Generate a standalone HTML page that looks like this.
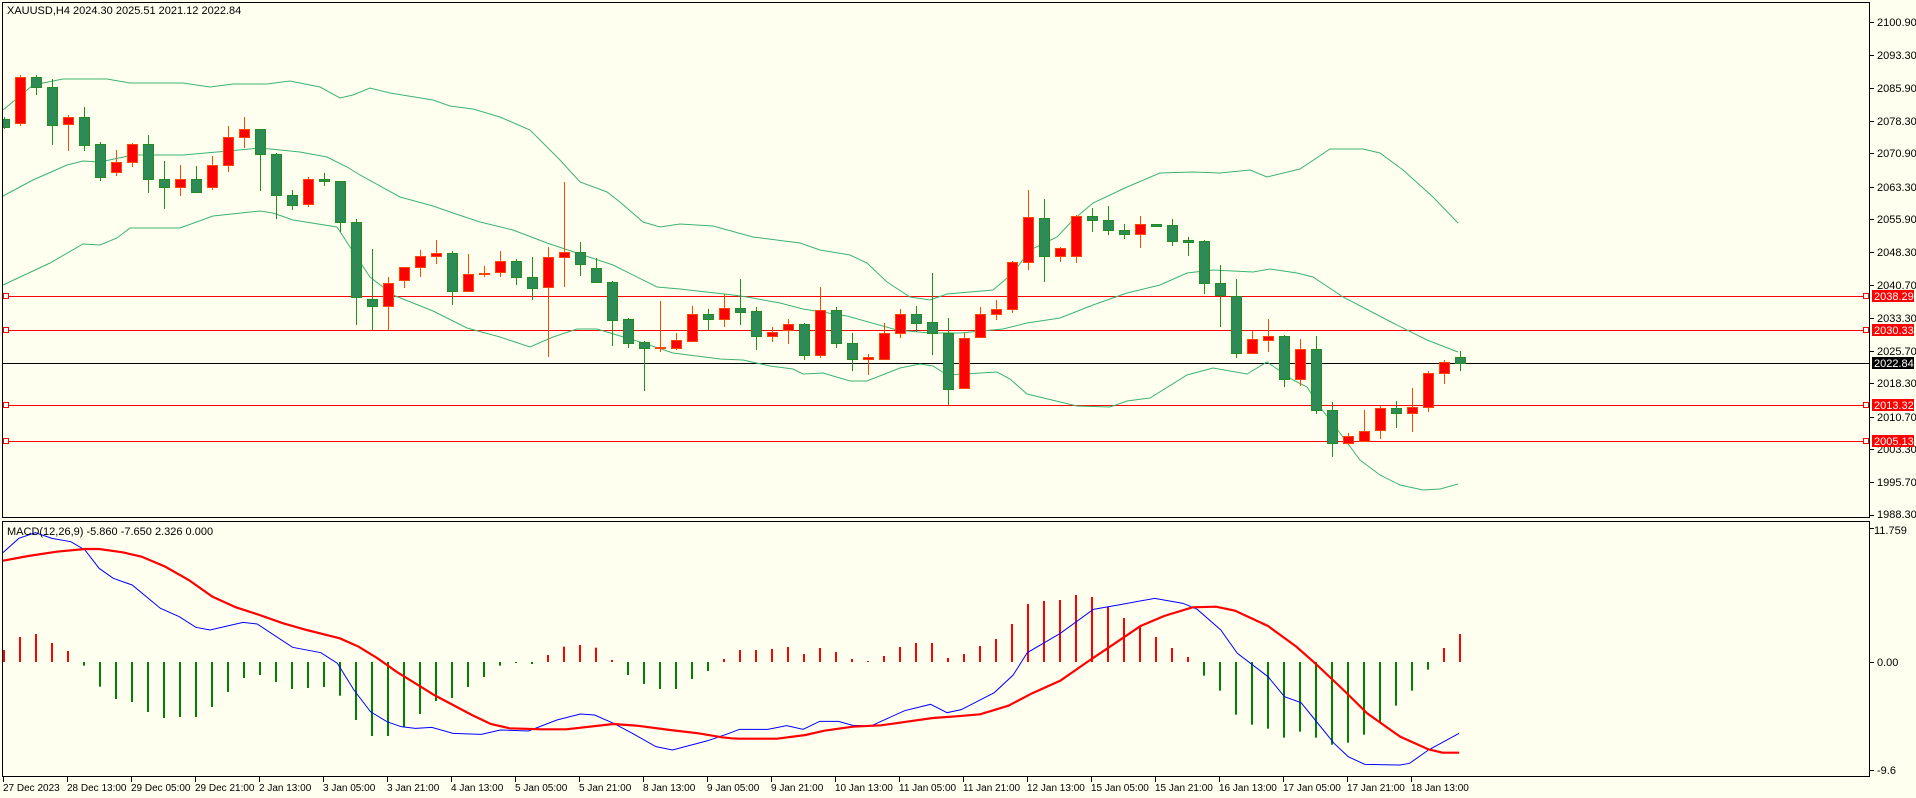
<!DOCTYPE html>
<html><head><meta charset="utf-8">
<style>
html,body{margin:0;padding:0;background:#FFFFF0;width:1916px;height:798px;overflow:hidden}
svg{display:block}
text{font-family:"Liberation Sans",sans-serif;font-size:11px;fill:#000}
</style></head>
<body>
<svg id="s" width="1916" height="798" xmlns="http://www.w3.org/2000/svg">
<rect width="1916" height="798" fill="#FFFFF0"/>
<g id="g"></g>
<rect x="2.5" y="2.5" width="1867" height="515" fill="none" stroke="#000" stroke-width="1"/>
<rect x="2.5" y="521.5" width="1867" height="255" fill="none" stroke="#000" stroke-width="1"/>
<text x="7" y="14">XAUUSD,H4  2024.30 2025.51 2021.12 2022.84</text>
<text x="7" y="535">MACD(12,26,9) -5.860 -7.650 2.326 0.000</text>
<g id="ax">
<text x="1877" y="26">2100.90</text>
<text x="1877" y="59">2093.30</text>
<text x="1877" y="92">2085.90</text>
<text x="1877" y="125">2078.30</text>
<text x="1877" y="157">2070.90</text>
<text x="1877" y="191">2063.30</text>
<text x="1877" y="223">2055.90</text>
<text x="1877" y="256">2048.30</text>
<text x="1877" y="289">2040.70</text>
<text x="1877" y="322">2033.30</text>
<text x="1877" y="355">2025.70</text>
<text x="1877" y="387">2018.30</text>
<text x="1877" y="421">2010.70</text>
<text x="1877" y="453">2003.30</text>
<text x="1877" y="486">1995.70</text>
<text x="1877" y="518">1988.30</text>
<text x="1874" y="534">11.759</text>
<text x="1877" y="666">0.00</text>
<text x="1877" y="774">-9.6</text>
</g>
<g id="tags">
<rect x="1872" y="290" width="42" height="12" fill="#FF0000"/><text x="1874" y="300" style="fill:#fff">2038.29</text>
<rect x="1872" y="324" width="42" height="12" fill="#FF0000"/><text x="1874" y="334" style="fill:#fff">2030.33</text>
<rect x="1872" y="357" width="42" height="12" fill="#000"/><text x="1874" y="367" style="fill:#fff">2022.84</text>
<rect x="1872" y="399" width="42" height="12" fill="#FF0000"/><text x="1874" y="409" style="fill:#fff">2013.32</text>
<rect x="1872" y="435" width="42" height="12" fill="#FF0000"/><text x="1874" y="445" style="fill:#fff">2005.13</text>
</g>
<g>
<text x="3" y="791" style="font-size:10px">27 Dec 2023</text>
<text x="67" y="791" style="font-size:10px">28 Dec 13:00</text>
<text x="131" y="791" style="font-size:10px">29 Dec 05:00</text>
<text x="195" y="791" style="font-size:10px">29 Dec 21:00</text>
<text x="259" y="791" style="font-size:10px">2 Jan 13:00</text>
<text x="323" y="791" style="font-size:10px">3 Jan 05:00</text>
<text x="387" y="791" style="font-size:10px">3 Jan 21:00</text>
<text x="451" y="791" style="font-size:10px">4 Jan 13:00</text>
<text x="515" y="791" style="font-size:10px">5 Jan 05:00</text>
<text x="579" y="791" style="font-size:10px">5 Jan 21:00</text>
<text x="643" y="791" style="font-size:10px">8 Jan 13:00</text>
<text x="707" y="791" style="font-size:10px">9 Jan 05:00</text>
<text x="771" y="791" style="font-size:10px">9 Jan 21:00</text>
<text x="835" y="791" style="font-size:10px">10 Jan 13:00</text>
<text x="899" y="791" style="font-size:10px">11 Jan 05:00</text>
<text x="963" y="791" style="font-size:10px">11 Jan 21:00</text>
<text x="1027" y="791" style="font-size:10px">12 Jan 13:00</text>
<text x="1091" y="791" style="font-size:10px">15 Jan 05:00</text>
<text x="1155" y="791" style="font-size:10px">15 Jan 21:00</text>
<text x="1219" y="791" style="font-size:10px">16 Jan 13:00</text>
<text x="1283" y="791" style="font-size:10px">17 Jan 05:00</text>
<text x="1347" y="791" style="font-size:10px">17 Jan 21:00</text>
<text x="1411" y="791" style="font-size:10px">18 Jan 13:00</text>
</g>
</svg>
<script>
(function(){
var NS="http://www.w3.org/2000/svg",g=document.getElementById("g");
function el(n,a){var e=document.createElementNS(NS,n);for(var k in a)e.setAttribute(k,a[k]);g.appendChild(e);return e;}
var py=[22,55,88,121,153,187,219,252,285,318,351,383,417,449,482,515,662,528,770];
py.forEach(function(y){el("line",{x1:1870,y1:y+.5,x2:1874,y2:y+.5,stroke:"#000"});});
for(var k=0;k<23;k++){var x=3+64*k;el("line",{x1:x+.5,y1:777,x2:x+.5,y2:782,stroke:"#000"});}
[296,330,405,441].forEach(function(y){
 el("line",{x1:3,y1:y+.5,x2:1869,y2:y+.5,stroke:"#FF0000"});
 el("rect",{x:3.5,y:y-2.5,width:5,height:5,fill:"#fff",stroke:"#FF0000"});
 el("rect",{x:1863.5,y:y-2.5,width:5,height:5,fill:"#fff",stroke:"#FF0000"});
});
el("line",{x1:3,y1:363.5,x2:1869,y2:363.5,stroke:"#000"});
function pl(pts,c,w){el("polyline",{points:pts.map(function(p){return p[0]+","+p[1]}).join(" "),fill:"none",stroke:c,"stroke-width":w});}
var up=[[3,110],[33,85],[63,79],[107,79],[130,83],[183,83],[210,87],[233,84],[267,84],[290,81],[320,87],[340,98],[353,95],[370,88],[390,93],[433,100],[450,106],[473,109],[500,117],[530,130],[560,160],[580,182],[607,192],[620,202],[643,222],[660,227],[680,224],[713,226],[753,237],[800,243],[820,250],[850,255],[867,263],[887,282],[910,297],[930,300],[947,294],[993,290],[1013,273],[1030,250],[1057,237],[1073,220],[1093,203],[1127,187],[1160,173],[1193,172],[1220,173],[1250,170],[1267,177],[1300,169],[1330,149],[1363,149],[1380,153],[1403,170],[1433,197],[1458,223]];
var mid=[[3,196],[33,180],[67,165],[83,161],[100,162],[133,155],[183,155],[217,152],[260,148],[300,152],[327,157],[347,167],[360,175],[400,197],[433,206],[453,213],[480,222],[513,230],[547,243],[613,265],[657,287],[680,289],[733,295],[747,297],[780,303],[803,309],[847,316],[897,330],[930,333],[960,333],[1003,329],[1027,323],[1060,318],[1093,305],[1127,293],[1160,285],[1187,273],[1213,270],[1253,272],[1270,269],[1297,273],[1313,277],[1343,297],[1393,323],[1427,340],[1458,352]];
var lo=[[3,285],[50,263],[83,244],[100,245],[117,238],[130,228],[180,228],[213,216],[260,211],[273,213],[293,220],[337,227],[350,247],[370,277],[393,295],[433,311],[467,328],[500,337],[530,347],[553,337],[577,329],[597,329],[640,342],[673,353],[720,359],[743,360],[770,366],[793,369],[803,374],[823,373],[850,381],[867,381],[900,368],[920,364],[933,366],[947,375],[997,372],[1010,379],[1027,394],[1077,406],[1110,407],[1127,401],[1150,398],[1187,375],[1213,368],[1247,374],[1267,362],[1293,380],[1307,387],[1320,407],[1343,437],[1360,460],[1380,475],[1400,485],[1423,490],[1440,489],[1458,484]];
pl(up,"#3CB371",1);pl(mid,"#3CB371",1);pl(lo,"#3CB371",1);
var C=[[117,119,127,129,'g'],[75,77,123,126,'r'],[75,77,87,95,'g'],[79,87,125,145,'g'],[115,117,124,151,'r'],[107,117,145,151,'g'],[142,144,177,181,'g'],[150,162,172,176,'r'],[143,144,162,167,'r'],[135,144,179,193,'g'],
[161,179,187,209,'g'],[165,179,187,196,'r'],[166,179,192,192,'g'],[156,165,187,190,'r'],[126,137,165,172,'r'],[117,129,137,148,'r'],[129,129,154,191,'g'],[153,154,195,219,'g'],[190,195,205,210,'g'],[177,179,204,207,'r'],
[173,179,181,186,'g'],[181,181,222,232,'g'],[219,222,297,325,'g'],[249,299,306,330,'g'],[277,283,306,330,'r'],[267,267,280,288,'r'],[250,256,267,277,'r'],[240,253,256,264,'r'],[251,253,291,305,'g'],[254,274,291,292,'r'],
[266,273,274,277,'r'],[251,261,272,277,'r'],[259,261,277,285,'g'],[257,277,288,300,'g'],[247,257,287,357,'r'],[182,252,257,287,'r'],[242,252,264,276,'g'],[258,268,282,282,'g'],[281,282,320,346,'g'],[318,319,343,348,'g'],
[341,342,348,391,'g'],[301,347,348,352,'r'],[333,340,348,350,'r'],[306,314,341,342,'r'],[309,314,319,330,'g'],[294,308,319,327,'r'],[279,308,312,325,'g'],[307,311,336,350,'g'],[327,332,336,342,'r'],[319,324,330,344,'r'],
[323,324,355,360,'g'],[287,310,355,358,'r'],[307,310,343,348,'g'],[333,343,359,371,'g'],[354,357,359,375,'r'],[323,333,359,359,'r'],[309,314,333,338,'r'],[306,314,323,332,'g'],[273,322,333,355,'g'],[318,333,389,405,'g'],
[333,338,388,388,'r'],[307,314,337,337,'r'],[300,309,314,320,'r'],[261,262,309,313,'r'],[190,217,262,270,'r'],[199,218,256,282,'g'],[247,248,256,262,'r'],[215,216,256,263,'r'],[208,216,220,232,'g'],[206,220,230,235,'g'],
[224,230,234,239,'g'],[216,224,234,248,'r'],[224,224,226,227,'g'],[219,225,241,246,'g'],[237,240,242,256,'g'],[240,241,283,294,'g'],[265,283,295,327,'g'],[279,296,353,358,'g'],[331,339,353,354,'r'],[319,336,340,352,'r'],
[335,336,379,387,'g'],[339,349,379,386,'r'],[336,349,410,414,'g'],[402,410,443,457,'g'],[433,436,443,445,'r'],[410,431,441,441,'r'],[406,408,430,439,'r'],[401,408,413,428,'g'],[388,407,413,432,'r'],[371,373,407,412,'r'],
[360,362,373,384,'r'],[351,357,363,371,'g']];
C.forEach(function(c,i){
 var x=4+16*i,gr=c[4]=='g',wc=gr?"#228B22":"#FF4500",fc=gr?"#2E8B57":"#FF0000";
 el("line",{x1:x+.5,y1:c[0],x2:x+.5,y2:c[3],stroke:wc,"stroke-width":1});
 var h=Math.max(c[2]-c[1],1);
 var bx=Math.max(x-5,3);
 el("rect",{x:bx+.5,y:c[1]+.5,width:x+5-bx,height:h,fill:fc,stroke:wc,"stroke-width":1});
});
var H=[390,351,342,369,393,437,500,537,546,576,594,591,591,561,516,474,465,486,507,504,501,527,600,648,648,621,582,543,534,501,471,437,428,432,405,380,375,383,420,465,492,507,507,477,453,417,390,390,387,381,402,384,396,417,423,408,381,369,369,414,402,378,357,312,252,243,240,225,231,261,294,318,351,384,411,467,512,584,614,626,653,635,653,674,668,644,605,557,512,449,384,342];
H.forEach(function(z,i){var x=4+16*i,y=520+z/3,neg=z>425;
 if(Math.abs(y-662)<1)y=neg?663:661;
 el("line",{x1:x,y1:662,x2:x,y2:y,stroke:neg?"#008000":"#FF0000","stroke-width":2});});
function cv(pts,ox){return pts.map(function(p){return[Math.max(3,ox+p[0]/2.119),520+p[1]/3];});}
var b1=[[0,98],[40,55],[75,38],[110,55],[150,65],[180,90],[210,145],[240,175],[280,195],[340,265],[380,290],[415,322],[445,330],[515,307],[545,312],[620,382],[680,398],[715,430],[750,510],[785,575],[820,605],[850,620],[880,625],[915,622],[960,640],[1020,643],[1060,630],[1120,633],[1180,600],[1230,582],[1260,585],[1300,610],[1340,640],[1390,680],[1425,690],[1500,662],[1545,640]];
var b2=[[20,628],[80,628],[120,617],[155,628],[190,604],[230,604],[260,616],[300,617],[370,572],[425,553],[460,578],[490,569],[560,518],[600,465],[630,398],[700,340],[770,268],[830,253],[900,235],[960,250],[990,268],[1040,330],[1075,400],[1140,470],[1175,530],[1210,548],[1240,600],[1280,670],[1310,710],[1345,733],[1420,735],[1440,730],[1480,690],[1545,640]];
var r1=[[0,122],[60,108],[120,95],[180,87],[210,87],[260,97],[300,110],[350,140],[400,180],[450,230],[500,262],[550,285],[600,310],[650,330],[720,355],[760,380],[800,415],[840,455],[880,490],[920,525],[960,555],[1000,585],[1040,612],[1080,625],[1150,628],[1200,628],[1300,612],[1350,617],[1420,630],[1480,640],[1530,652],[1550,655]];
var r2=[[20,656],[100,656],[160,645],[200,632],[260,620],[320,616],[380,604],[430,594],[480,589],[530,583],[590,557],[640,520],[700,482],[760,423],[800,385],[870,318],[920,288],[980,262],[1030,260],[1070,272],[1140,318],[1200,380],[1240,430],[1300,510],[1350,580],[1420,650],[1480,688],[1510,698],[1545,698]];
pl(cv(b1,0).concat(cv(b2,730)),"#0000FF",1);
pl(cv(r1,0).concat(cv(r2,730)),"#FF0000",2.2);
})();
</script>
</body></html>
